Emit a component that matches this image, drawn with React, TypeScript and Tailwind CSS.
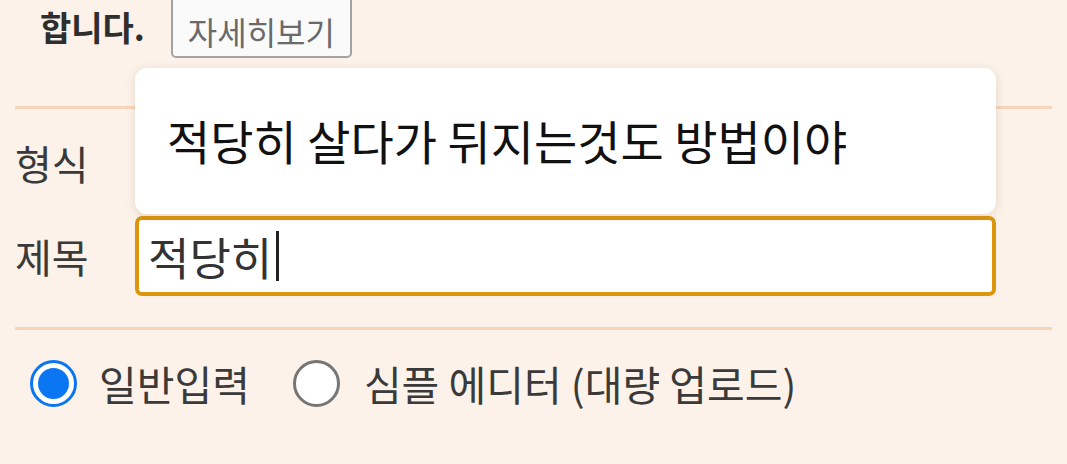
import React from "react";

const font = { fontFamily: '"Noto Sans CJK KR", "Noto Sans", sans-serif' };

function Radio({ checked }: { checked: boolean }) {
    return checked ? (
        <span className="flex h-[47px] w-[47px] shrink-0 items-center justify-center rounded-full border-[3px] border-[#0b76f2] bg-white">
            <span className="h-[31px] w-[31px] rounded-full bg-[#0b76f2]" />
        </span>
    ) : (
        <span className="block h-[47px] w-[47px] shrink-0 rounded-full border-[3px] border-[#767676] bg-white" />
    );
}

export default function App() {
    return (
        <div style={font} className="relative h-[464px] w-[1067px] overflow-hidden bg-[#fcf2e9] text-[#3a3a3a]">
            {/* top line of the notice */}
            <div className="-mt-[20px] flex h-[78px] items-end pl-[40px]">
                <span className="mb-[14px] text-[34px] font-bold leading-none text-[#2e2e2e]">합니다.</span>
                <button className="ml-[26px] flex h-[78px] w-[181px] items-end justify-center rounded-[5px] border-2 border-[#a3a3a3] bg-[#fafafa] pb-[9px] text-[32px] leading-none text-[#6a6a6a]">
                    자세히보기
                </button>
            </div>

            <div className="mx-[15px] mt-[48px] h-[3px] bg-[#f6d5bb]" />

            {/* 형식 row */}
            <div className="flex h-[107px] items-center px-[15px]">
                <span className="w-[120px] text-[40px] leading-none">형식</span>
            </div>

            {/* 제목 row */}
            <div className="flex items-center px-[15px]">
                <span className="w-[120px] text-[40px] leading-none">제목</span>
                <div className="flex h-[80px] w-[861px] items-center rounded-[7px] border-4 border-[#dc960d] bg-white pl-[9px]">
                    <span className="text-[45px] leading-none text-[#333]">적당히</span>
                    <span className="ml-[4px] h-[50px] w-[3px] bg-[#222]" />
                </div>
            </div>

            <div className="mx-[15px] mt-[31px] h-[3px] bg-[#f6d5bb]" />

            {/* input mode */}
            <div className="mt-[30px] flex items-center pl-[30px]">
                <Radio checked />
                <span className="ml-[22px] text-[41px] leading-none">일반입력</span>
                <span className="ml-[43px] flex">
                    <Radio checked={false} />
                </span>
                <span className="ml-[24px] text-[41px] leading-none">심플 에디터 (대량 업로드)</span>
            </div>

            {/* autocomplete suggestion */}
            <div className="absolute left-[135px] top-[68px] flex h-[146px] w-[861px] items-center rounded-[12px] bg-white pb-[4px] pl-[32px] shadow-[0_2px_10px_rgba(120,90,60,0.18)]">
                <span className="text-[47px] leading-none text-[#111]">적당히 살다가 뒤지는것도 방법이야</span>
            </div>
        </div>
    );
}
